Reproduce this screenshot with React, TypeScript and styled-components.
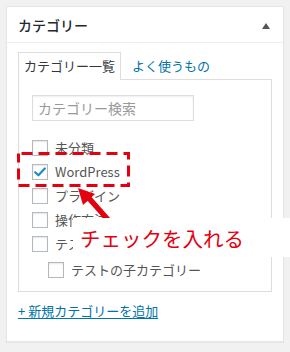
import React from "react";
import styled, { createGlobalStyle } from "styled-components";

const GlobalStyle = createGlobalStyle`
  html, body { margin: 0; padding: 0; }
  body {
    background: #f1f1f1;
    font-family: "Noto Sans CJK JP", "Noto Sans", sans-serif;
    color: #444;
  }
`;

const Page = styled.div`
  position: relative;
  width: 290px;
  height: 352px;
  padding: 6px;
  box-sizing: border-box;
  overflow: hidden;
`;

const Panel = styled.div`
  width: 278px;
  height: 336px;
  box-sizing: border-box;
  background: #fff;
  border: 1px solid #e5e5e5;
  box-shadow: 0 1px 1px rgba(0, 0, 0, 0.04);
`;

const Header = styled.div`
  height: 36px;
  box-sizing: border-box;
  border-bottom: 1px solid #eee;
  display: flex;
  align-items: center;
  justify-content: space-between;
  padding: 0 13px 0 11px;
`;

const Title = styled.h2`
  margin: 0;
  font-size: 14px;
  font-weight: 500;
  color: #23282d;
  line-height: 20px;
`;

const Toggle = styled.span`
  width: 0;
  height: 0;
  border-left: 4px solid transparent;
  border-right: 4px solid transparent;
  border-bottom: 6px solid #555;
  margin-top: 2px;
`;

const Body = styled.div`
  padding: 8px 11px 0;
`;

const Tabs = styled.div`
  display: flex;
  align-items: center;
  height: 28px;
`;

const Tab = styled.div<{ $active?: boolean }>`
  height: 28px;
  box-sizing: border-box;
  display: flex;
  align-items: center;
  font-size: 13px;
  line-height: 18px;
  padding: ${(p) => (p.$active ? "0 5px" : "0 0 0 11px")};
  color: ${(p) => (p.$active ? "#32373c" : "#0073aa")};
  background: ${(p) => (p.$active ? "#fff" : "transparent")};
  border: ${(p) => (p.$active ? "1px solid #ddd" : "none")};
  border-bottom: none;
  position: relative;
  z-index: 1;
  margin-bottom: -1px;
`;

const TabPanel = styled.div`
  height: 213px;
  box-sizing: border-box;
  border: 1px solid #ddd;
  padding: 15px 13px;
`;

const Search = styled.input`
  display: block;
  width: 162px;
  height: 26px;
  box-sizing: border-box;
  border: 1px solid #ddd;
  box-shadow: inset 0 1px 2px rgba(0, 0, 0, 0.07);
  padding: 0 5px;
  margin: 0;
  font-family: inherit;
  font-size: 14px;
  color: #32373c;
  outline: none;
  &::placeholder { color: #999; }
`;

const List = styled.ul`
  list-style: none;
  margin: 15px 0 0;
  padding: 0;
`;

const Row = styled.li<{ $child?: boolean }>`
  height: 24px;
  display: flex;
  align-items: center;
  gap: 7px;
  padding-left: ${(p) => (p.$child ? "16px" : "0")};
  margin-top: ${(p) => (p.$child ? "2px" : "0")};
  font-size: 13px;
  line-height: 18px;
  color: #555;
`;

const Box = styled.span`
  width: 16px;
  height: 16px;
  box-sizing: border-box;
  border: 1px solid #b4b9be;
  background: #fff;
  box-shadow: inset 0 1px 2px rgba(0, 0, 0, 0.1);
  display: flex;
  align-items: center;
  justify-content: center;
  flex: none;
`;

const AddLink = styled.a`
  display: inline-block;
  margin-top: 9px;
  font-size: 13px;
  line-height: 20px;
  color: #0073aa;
  text-decoration: underline;
  text-underline-offset: 2px;
`;

const Dashed = styled.svg`
  position: absolute;
  left: 17px;
  top: 152px;
`;

const Arrow = styled.svg`
  position: absolute;
  left: 70px;
  top: 180px;
`;

const Callout = styled.div`
  position: absolute;
  left: 73px;
  top: 218px;
  width: 217px;
  height: 39px;
  background: #fff;
  display: flex;
  align-items: center;
  padding-left: 7px;
  box-sizing: border-box;
  color: #e3000f;
  font-size: 20.5px;
  line-height: 24px;
  white-space: nowrap;
`;

const Check = () => (
  <svg width="12" height="10" viewBox="0 0 12 10">
    <path d="M1.2 5.2 L4.4 8.3 L10.8 1.5" fill="none" stroke="#1e8cbe" strokeWidth="2.2" strokeLinecap="round" strokeLinejoin="round" />
  </svg>
);

type Item = { label: string; checked?: boolean; child?: boolean };

const items: Item[] = [
  { label: "未分類" },
  { label: "WordPress", checked: true },
  { label: "プラグイン" },
  { label: "操作方法" },
  { label: "テスト" },
  { label: "テストの子カテゴリー", child: true },
];

export default function App() {
  return (
    <>
      <GlobalStyle />
      <Page>
        <Panel>
          <Header>
            <Title>カテゴリー</Title>
            <Toggle />
          </Header>
          <Body>
            <Tabs>
              <Tab $active>カテゴリー一覧</Tab>
              <Tab>よく使うもの</Tab>
            </Tabs>
            <TabPanel>
              <Search placeholder="カテゴリー検索" />
              <List>
                {items.map((it) => (
                  <Row key={it.label} $child={it.child}>
                    <Box>{it.checked && <Check />}</Box>
                    {it.label}
                  </Row>
                ))}
              </List>
            </TabPanel>
            <AddLink href="#">+ 新規カテゴリーを追加</AddLink>
          </Body>
        </Panel>
        <Dashed width="113" height="35" viewBox="0 0 113 35">
          <rect x="1.5" y="1.5" width="110" height="32" fill="none" stroke="#e3000f" strokeWidth="3" strokeDasharray="11 6" strokeDashoffset="-3" />
        </Dashed>
        <Arrow width="50" height="50" viewBox="0 0 50 50">
          <line x1="40" y1="42" x2="17" y2="16" stroke="#e3000f" strokeWidth="5.5" />
          <polygon points="8,8 25,14 13,25" fill="#e3000f" />
        </Arrow>
        <Callout>チェックを入れる</Callout>
      </Page>
    </>
  );
}
